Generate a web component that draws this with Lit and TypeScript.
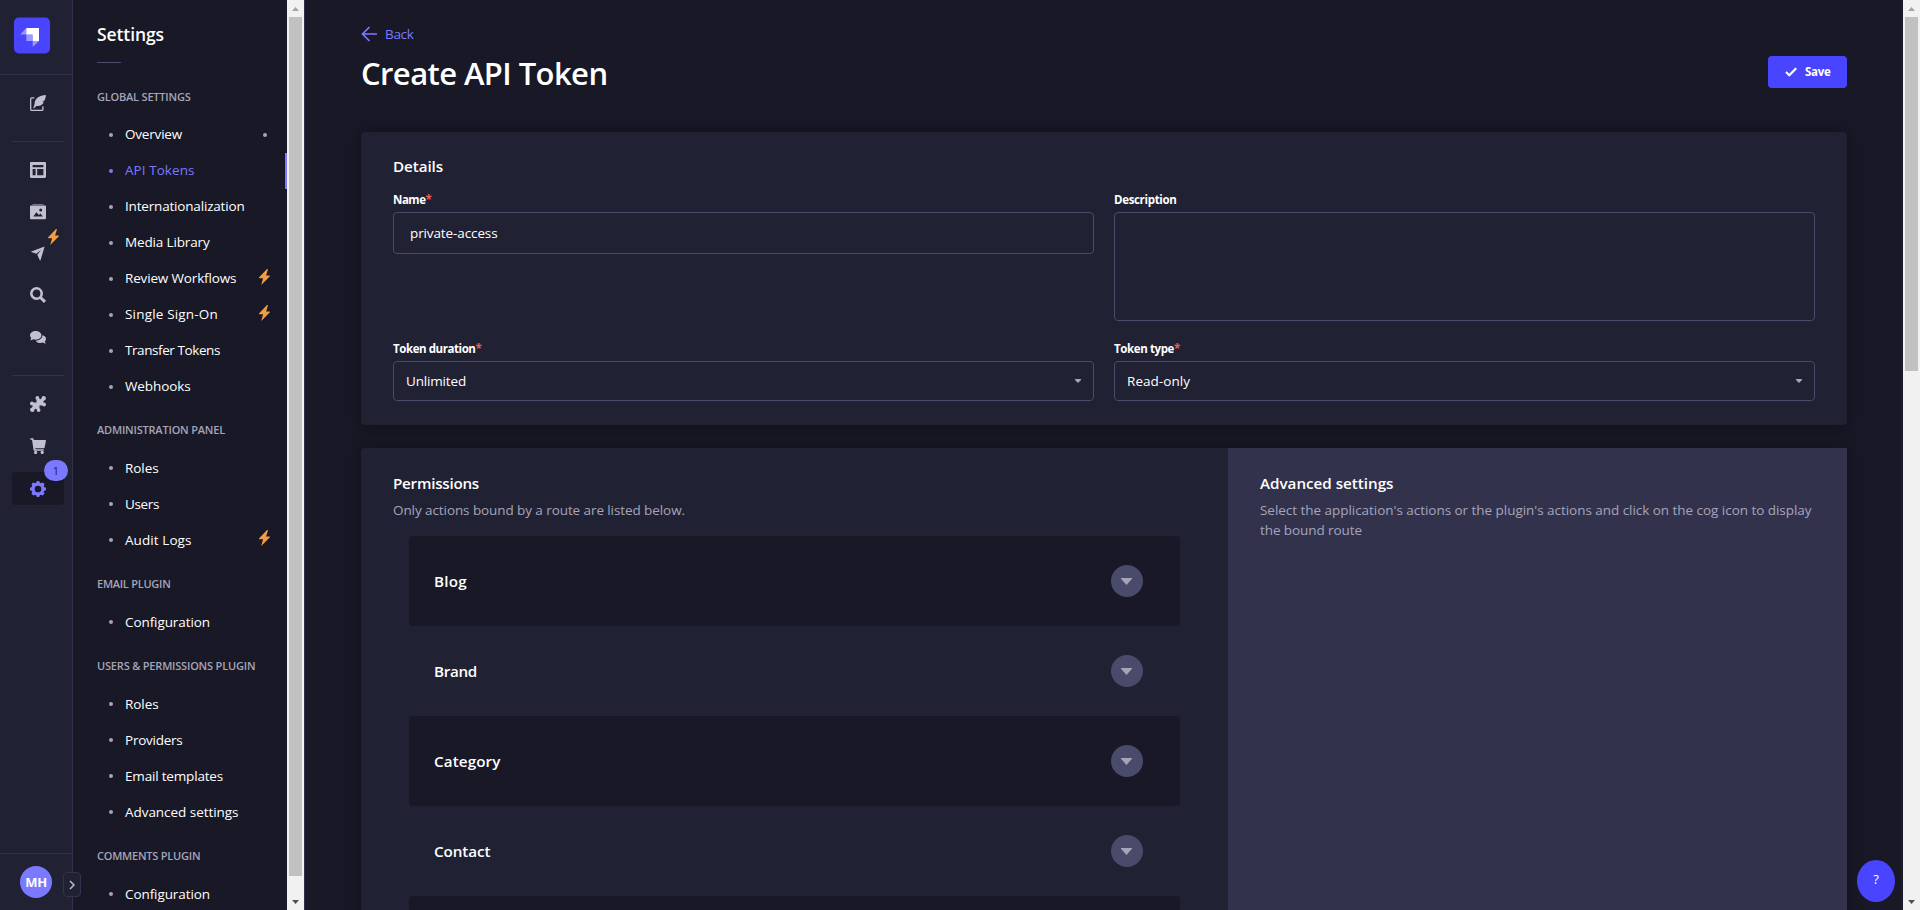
import { LitElement, html, css, svg, nothing, TemplateResult } from "lit";
import { customElement } from "lit/decorators.js";
import { styleMap } from "lit/directives/style-map.js";
import { classMap } from "lit/directives/class-map.js";

const ctx = document.createElement("canvas").getContext("2d")!;

/** Text whose tracking is computed so that it spans `width` pixels. */
function fit(text: string, width: number, size = 13.5, weight = 400) {
  if (!text) return nothing;
  ctx.font = `${weight} ${size}px "Open Sans"`;
  const tracking = (width - ctx.measureText(text).width) / text.length;
  return html`<span style=${styleMap({ letterSpacing: `${tracking.toFixed(3)}px` })}>${text}</span>`;
}

interface Link { label: string; width: number; active?: boolean; bolt?: boolean; dot?: boolean; }
interface Section { title: string; width: number; links: Link[]; }

const SECTIONS: Section[] = [
  { title: "GLOBAL SETTINGS", width: 93.5, links: [
    { label: "Overview", width: 57, dot: true },
    { label: "API Tokens", width: 69.5, active: true },
    { label: "Internationalization", width: 119.5 },
    { label: "Media Library", width: 84.5 },
    { label: "Review Workflows", width: 111.3, bolt: true },
    { label: "Single Sign-On", width: 93, bolt: true },
    { label: "Transfer Tokens", width: 95 },
    { label: "Webhooks", width: 65.5 },
  ] },
  { title: "ADMINISTRATION PANEL", width: 128, links: [
    { label: "Roles", width: 33.5 },
    { label: "Users", width: 34 },
    { label: "Audit Logs", width: 66.5, bolt: true },
  ] },
  { title: "EMAIL PLUGIN", width: 73.5, links: [{ label: "Configuration", width: 85 }] },
  { title: "USERS & PERMISSIONS PLUGIN", width: 158.3, links: [
    { label: "Roles", width: 33.5 },
    { label: "Providers", width: 57.5 },
    { label: "Email templates", width: 98 },
    { label: "Advanced settings", width: 113.5 },
  ] },
  { title: "COMMENTS PLUGIN", width: 103.3, links: [{ label: "Configuration", width: 85 }] },
];

const PERMISSIONS: [string, number][] = [
  ["Blog", 33], ["Brand", 43], ["Category", 66.5], ["Contact", 56.5], ["", 0],
];

const bolt = html`<svg class="bolt" viewBox="0 0 11 16"><path fill="#f29d41" d="M8 0 .2 8.300c-.4.4-.1.900.4.900h3.500L2.200 16l8.500-8.400c.4-.4.2-1.100-.3-1.100H7.100L8.900.500C9 0 8.400-.3 8 0z"/></svg>`;

const icon = (body: TemplateResult) => html`<svg class="icon" viewBox="0 0 16 16">${body}</svg>`;

const ICONS = {
  write: icon(svg`<path fill="none" stroke="currentColor" stroke-width="1.3" stroke-linejoin="round" d="M4.300 2.900H1.600a.9.9 0 0 0-.9.9v10.600c0 .5.400.9.9.9h10.400c.5 0 .9-.4.9-.9v-3.200"/><path fill="currentColor" d="M16 0C9.500.300 4.600 3.200 4.500 9.200L3.300 13l.7.500 2.200-2.500c4.500.6 6.900-1.600 7.500-4.200l-1.500-.2 2-.8C15.400 4.200 15.800 2 16 0z"/>`),
  layout: icon(svg`<path fill="currentColor" fill-rule="evenodd" d="M1.200 0h13.600C15.500 0 16 .5 16 1.200v13.600c0 .7-.5 1.200-1.200 1.200H1.200C.5 16 0 15.500 0 14.800V1.200C0 .5.5 0 1.200 0zM2.600 3v2.300h10.800V3zM2.600 7v6.200h3V7zM7.200 7v6.200h6.200V7z"/>`),
  media: icon(svg`<g transform="translate(0 -.7)"><path fill="currentColor" opacity=".55" d="M2.300 1.800C2.300 1 2.800.700 3.400.700h9.200c.6 0 1.100.3 1.100 1.100z"/><path fill="currentColor" fill-rule="evenodd" d="M1.200 2.200h13.600c.7 0 1.200.4 1.200 1.100v11.600c0 .7-.5 1.100-1.200 1.100H1.200C.5 16 0 15.600 0 14.900V3.300c0-.7.5-1.100 1.200-1.100zM10.700 5.300a1.500 1.500 0 1 0 0 3 1.500 1.500 0 0 0 0-3zM3.300 13.300h9.500l-2.300-3-1.600 1.500L6.400 8.900z"/></g>`),
  plane: icon(svg`<path fill="currentColor" d="M14.600 1.600 1.300 6.500c-.3.100-.3.500 0 .6l5 1.700 4.900-4-3.900 5 2.500 5.500c.1.300.6.300.7 0z"/>`),
  search: icon(svg`<circle cx="6.500" cy="6.500" r="5.200" fill="none" stroke="currentColor" stroke-width="2.600"/><path stroke="currentColor" stroke-width="3" d="m10.500 10.500 4.500 4.400"/>`),
  chat: icon(svg`<path fill="currentColor" d="M5.700 2C2.500 2 0 3.900 0 6.300c0 1.100.5 2 1.200 2.800-.1.900-.6 1.600-1.100 2.100 1.200 0 2.300-.3 3.100-.9.800.3 1.600.4 2.500.4 3.200 0 5.700-2 5.700-4.400S8.900 2 5.700 2z"/><path fill="currentColor" d="M12.400 6.300c0 3.100-3 5.400-6.700 5.400.9 1.600 2.700 2.400 4.800 2.400.9 0 1.700-.2 2.400-.5.800.6 1.900.9 3.100.9-.6-.5-1-1.200-1.200-2 .8-.8 1.200-1.700 1.200-2.800 0-1.700-1.500-3-3.600-3.400z"/>`),
  puzzle: icon(svg`<g fill="currentColor"><path d="M6.500 2.200h2l2 1 2-1h1.700v1.800l-1 2 1 2v1.500H9.500v4.300h-2l-2-1-2 1H1.800v-1.800l1-2-1-2V6.500h4.700z"/><circle cx="7.400" cy="1.900" r="1.900"/><circle cx="13.700" cy="2.300" r="2.200"/><circle cx="14.100" cy="8.500" r="1.900"/><circle cx="1.900" cy="7.500" r="1.900"/><circle cx="2.300" cy="13.700" r="2.200"/><circle cx="8.600" cy="14.100" r="1.900"/></g>`),
  cart: icon(svg`<path fill="currentColor" d="M.3.200h2.600c.3 0 .5.200.6.500l.2 1.300h11.500c.5 0 .8.400.7.900l-1.300 6.800c-.1.300-.3.500-.7.500H5.200l.2 1.100h8.300v1.400H4.300c-.4 0-.6-.2-.7-.5L2 1.700H.3z"/><circle cx="5.600" cy="14.400" r="1.600" fill="currentColor"/><circle cx="12.200" cy="14.400" r="1.600" fill="currentColor"/>`),
  gear: icon(svg`<circle cx="8" cy="8" r="4.900" fill="none" stroke="currentColor" stroke-width="3.100"/>${[0, 45, 90, 135, 180, 225, 270, 315].map((a) => svg`<path fill="currentColor" transform="rotate(${a} 8 8)" d="M6.700.2c.1-.3 2.500-.3 2.600 0l.9 2.200H5.800z"/>`)}`),
};

@customElement("scroll-rail")
class ScrollRail extends LitElement {
  static properties = { thumb: { type: Number } };
  declare thumb: number;
  static styles = css`
    :host { display: flex; flex-direction: column; align-items: center; width: 17px; height: 910px; flex: none; background: #f1f1f1; }
    .cap { height: 17px; width: 17px; flex: none; }
    .thumb { width: 13px; background: #c1c1c1; }
    .space { flex: 1; }
  `;
  render() {
    return html`
      <svg class="cap" viewBox="0 0 17 17"><path fill="#a3a3a3" d="M5 11h7L8.500 7z"/></svg>
      <div class="thumb" style=${styleMap({ height: `${this.thumb}px` })}></div>
      <div class="space"></div>
      <svg class="cap" viewBox="0 0 17 17"><path fill="#505050" d="M5 7h7L8.500 11z"/></svg>`;
  }
}

@customElement("main-nav")
class MainNav extends LitElement {
  static styles = css`
    :host { display: flex; flex-direction: column; box-sizing: border-box; width: 73px; height: 910px; flex: none; background: #212134; border-right: 1px solid #32324d; color: #c0c0cf; position: relative; }
    .brand { height: 57px; border-bottom: 1px solid #32324d; padding: 17px 0 0 14px; }
    .logo { display: block; width: 36px; height: 37px; }
    .list { display: flex; flex-direction: column; padding: 11px 8px 0 12px; flex: 1; }
    .item { display: flex; align-items: center; justify-content: center; height: 34px; margin-bottom: 8px; border-radius: 4px; position: relative; }
    .icon { width: 16px; height: 16px; display: block; overflow: visible; }
    .rule { height: 1px; background: #32324d; margin: 13px 0 11px; }
    .group { display: flex; flex-direction: column; }
    .middle .item { height: 33.700px; }
    .rule.second { margin: 14px 0 11px; }
    .bolt { position: absolute; width: 11px; height: 16px; left: 36px; top: -7.500px; }
    .item.active { height: 33px; margin-top: 1px; background: #181826; color: #7b79ff; }
    .badge { position: absolute; left: 32px; top: -12px; width: 24px; height: 21px; border-radius: 11px; background: #7b79ff; color: #212134; font: 400 11px/21px "Open Sans", sans-serif; text-align: center; }
    .user { border-top: 1px solid #32324d; height: 57px; padding: 12px 0 0 20px; box-sizing: border-box; }
    .avatar { width: 32px; height: 32px; border-radius: 50%; background: #7b79ff; color: #fff; font: 700 13px/32px "Open Sans", sans-serif; text-align: center; letter-spacing: -.3px; }
    .toggle { position: absolute; left: 63px; top: 872px; width: 18px; height: 25px; box-sizing: border-box; border: 1px solid #32324d; border-radius: 4px; background: #212134; display: flex; align-items: center; justify-content: center; z-index: 2; }
    .chev { width: 6px; height: 10px; }
  `;
  render() {
    const item = (i: TemplateResult, extra: unknown = nothing, active = false) =>
      html`<div class=${classMap({ item: true, active })}>${i}${extra}</div>`;
    return html`
      <div class="brand"><svg class="logo" viewBox="0 0 36 37"><rect y=".5" width="36" height="36" rx="5" fill="#4945ff"/><path fill="#fff" d="M12.300 11h12.700v12.900h-6.300v-6.400h-6.400z"/><path fill="#fff" opacity=".45" d="M12.300 11v6.500H6.300zM12.300 17.500h6.400v6.400h-6.400zM18.700 23.900H25l-6.300 6.100z"/></svg></div>
      <div class="list">
        ${item(ICONS.write)}
        <div class="rule"></div>
        <div class="group middle">${item(ICONS.layout)}${item(ICONS.media)}${item(ICONS.plane, bolt)}${item(ICONS.search)}${item(ICONS.chat)}</div>
        <div class="rule second"></div>
        ${item(ICONS.puzzle)}${item(ICONS.cart)}${item(ICONS.gear, html`<span class="badge">1</span>`, true)}
      </div>
      <div class="user"><div class="avatar">MH</div></div>
      <div class="toggle"><svg class="chev" viewBox="0 0 6 10"><path d="M1 1l4 4-4 4" fill="none" stroke="#c0c0cf" stroke-width="1.500"/></svg></div>`;
  }
}

@customElement("settings-nav")
class SettingsNav extends LitElement {
  static styles = css`
    :host { display: block; width: 214px; height: 910px; flex: none; overflow: hidden; background: #181826; color: #fff; font: 400 13.500px "Open Sans", sans-serif; white-space: nowrap; }
    .title { font-size: 17.500px; line-height: 24px; font-weight: 600; padding: 22px 0 0 24px; }
    .rule { width: 24px; height: 1px; background: #4a4a6a; margin: 16px 0 26px 24px; }
    .section { margin-bottom: 18px; }
    .head { font-size: 11px; font-weight: 600; line-height: 16px; color: #a5a5ba; padding: 0 0 12px 24px; }
    .link { display: flex; align-items: center; height: 36px; padding: 0 22px 0 36px; box-sizing: border-box; line-height: 20px; }
    .dot { width: 4px; height: 4px; border-radius: 50%; background: #a5a5ba; margin-right: 12px; flex: none; }
    .label { flex: 1; padding-bottom: 2px; }
    .section + .section { margin-top: -1px; margin-bottom: 19px; }
    .section + .section .label { padding-bottom: 1px; }
    .dot.end { margin-right: -2px; }
    .active { color: #7b79ff; border-right: 2px solid #7b79ff; }
    .active .dot { background: #7b79ff; }
    .bolt { width: 11px; height: 16px; margin: 0 -5px 5px 0; flex: none; }
  `;
  render() {
    return html`
      <div class="title">${fit("Settings", 67, 17.5, 600)}</div>
      <div class="rule"></div>
      ${SECTIONS.map((s) => html`<div class="section">
        <div class="head">${fit(s.title, s.width, 11, 600)}</div>
        ${s.links.map((l) => html`<div class=${classMap({ link: true, active: !!l.active })}>
          <span class="dot"></span><span class="label">${fit(l.label, l.width)}</span>
          ${l.bolt ? bolt : nothing}${l.dot ? html`<span class="dot end"></span>` : nothing}
        </div>`)}
      </div>`)}`;
  }
}

@customElement("app-root")
class AppRoot extends LitElement {
  static styles = css`
    :host { display: flex; width: 1920px; height: 910px; overflow: hidden; background: #181826; color: #fff; font: 400 13.500px/20px "Open Sans", sans-serif; position: relative; }
    .main { flex: 1; box-sizing: border-box; border-left: 1px solid #32324d; padding: 24px 56px 0; height: 910px; overflow: hidden; }
    .back { display: flex; align-items: center; gap: 8px; height: 20px; color: #7b79ff; }
    .arrow { width: 16px; height: 16px; }
    .heading { display: flex; align-items: center; justify-content: space-between; height: 56px; margin-bottom: 32px; }
    .heading h1 { font-size: 31px; line-height: 40px; font-weight: 600; margin: 2px 0 0; }
    .save { display: flex; align-items: center; gap: 8px; width: 79px; height: 32px; box-sizing: border-box; padding-left: 17px; border-radius: 4px; background: #4945ff; font-size: 11.500px; font-weight: 700; }
    .tick { width: 12px; height: 10px; }
    .card { background: #212134; border-radius: 4px; box-shadow: 0 2px 15px rgba(3, 3, 5, .35); }
    .details { box-sizing: border-box; height: 293px; padding: 23px 32px 0; margin-bottom: 23px; }
    h2 { font-size: 15.200px; line-height: 22px; font-weight: 600; margin: 0; }
    .grid { display: grid; grid-template-columns: 701px 701px; column-gap: 20px; row-gap: 20px; margin-top: 15px; }
    .label { font-size: 11.500px; line-height: 16px; font-weight: 700; margin-bottom: 4px; }
    .star { color: #ee5e52; }
    .box { box-sizing: border-box; border: 1px solid #4a4a6a; border-radius: 4px; display: flex; align-items: center; }
    .input { height: 42px; padding-left: 16px; }
    .area { height: 109px; }
    .select { height: 40px; padding: 0 12px 1px; justify-content: space-between; }
    .tri { width: 6px; height: 4px; }
    .perm { display: flex; height: 500px; }
    .left { width: 867px; flex: none; box-sizing: border-box; padding: 24px 48px 0 32px; }
    .right { flex: 1; background: #32324d; padding: 24px 0 0 32px; }
    .muted { color: #a5a5ba; margin-top: 6px; }
    .rows { margin: 16px 0 0 16px; }
    .row { height: 90px; box-sizing: border-box; display: flex; align-items: center; justify-content: space-between; padding: 0 37px 0 25px; border-radius: 4px; font-size: 15.200px; font-weight: 600; }
    .row.dark { background: #181826; }
    .round { width: 32px; height: 32px; border-radius: 50%; background: #4a4a6a; display: flex; align-items: center; justify-content: center; margin-left: auto; }
    .caret { width: 11px; height: 7px; margin-right: 1px; }
    .help { position: absolute; left: 1857px; top: 860px; width: 38px; height: 42px; border-radius: 50%; background: #4945ff; text-align: center; font-size: 13px; line-height: 39px; }
  `;
  label(text: string, width: number, required = false) {
    return html`<div class="label">${fit(text, width, 11.5, 700)}${required ? html`<span class="star">*</span>` : nothing}</div>`;
  }
  render() {
    const tri = html`<svg class="tri" viewBox="0 0 6 4"><path fill="#a5a5ba" d="M0 0h6v1L3 4 0 1z"/></svg>`;
    return html`
      <main-nav></main-nav>
      <settings-nav></settings-nav>
      <scroll-rail .thumb=${859}></scroll-rail>
      <div class="main">
        <div class="back"><svg class="arrow" viewBox="0 0 16 16"><path d="M16 8H1.500M8.500 1 1.500 8l7 7" fill="none" stroke="currentColor" stroke-width="1.700"/></svg>${fit("Back", 28.5)}</div>
        <div class="heading">
          <h1>${fit("Create API Token", 246.5, 31, 600)}</h1>
          <div class="save"><svg class="tick" viewBox="0 0 12 10"><path d="M1 5l3.300 3.300L11.200 1.300" fill="none" stroke="#fff" stroke-width="2.200"/></svg>${fit("Save", 25.5, 11.5, 700)}</div>
        </div>
        <div class="card details">
          <h2>${fit("Details", 50, 15.2, 600)}</h2>
          <div class="grid">
            <div>${this.label("Name", 32.5, true)}<div class="box input">${fit("private-access", 87.5)}</div></div>
            <div>${this.label("Description", 62.5)}<div class="box area"></div></div>
            <div>${this.label("Token duration", 82.5, true)}<div class="box select">${fit("Unlimited", 60)}${tri}</div></div>
            <div>${this.label("Token type", 60, true)}<div class="box select">${fit("Read-only", 63)}${tri}</div></div>
          </div>
        </div>
        <div class="card perm">
          <div class="left">
            <h2>${fit("Permissions", 86, 15.2, 600)}</h2>
            <div class="muted">${fit("Only actions bound by a route are listed below.", 292)}</div>
            <div class="rows">
              ${PERMISSIONS.map(([name, width], i) => html`<div class=${classMap({ row: true, dark: i % 2 === 0 })}>
                ${fit(name, width, 15.2, 600)}
                <span class="round"><svg class="caret" viewBox="0 0 11 7"><path fill="#a5a5ba" d="M0 0h11v.8L5.500 7 0 .8z"/></svg></span>
              </div>`)}
            </div>
          </div>
          <div class="right">
            <h2>${fit("Advanced settings", 133.5, 15.2, 600)}</h2>
            <div class="muted">${fit("Select the application's actions or the plugin's actions and click on the cog icon to display", 551.5)}<br>${fit("the bound route", 102)}</div>
          </div>
        </div>
      </div>
      <scroll-rail .thumb=${354}></scroll-rail>
      <div class="help">?</div>`;
  }
}
